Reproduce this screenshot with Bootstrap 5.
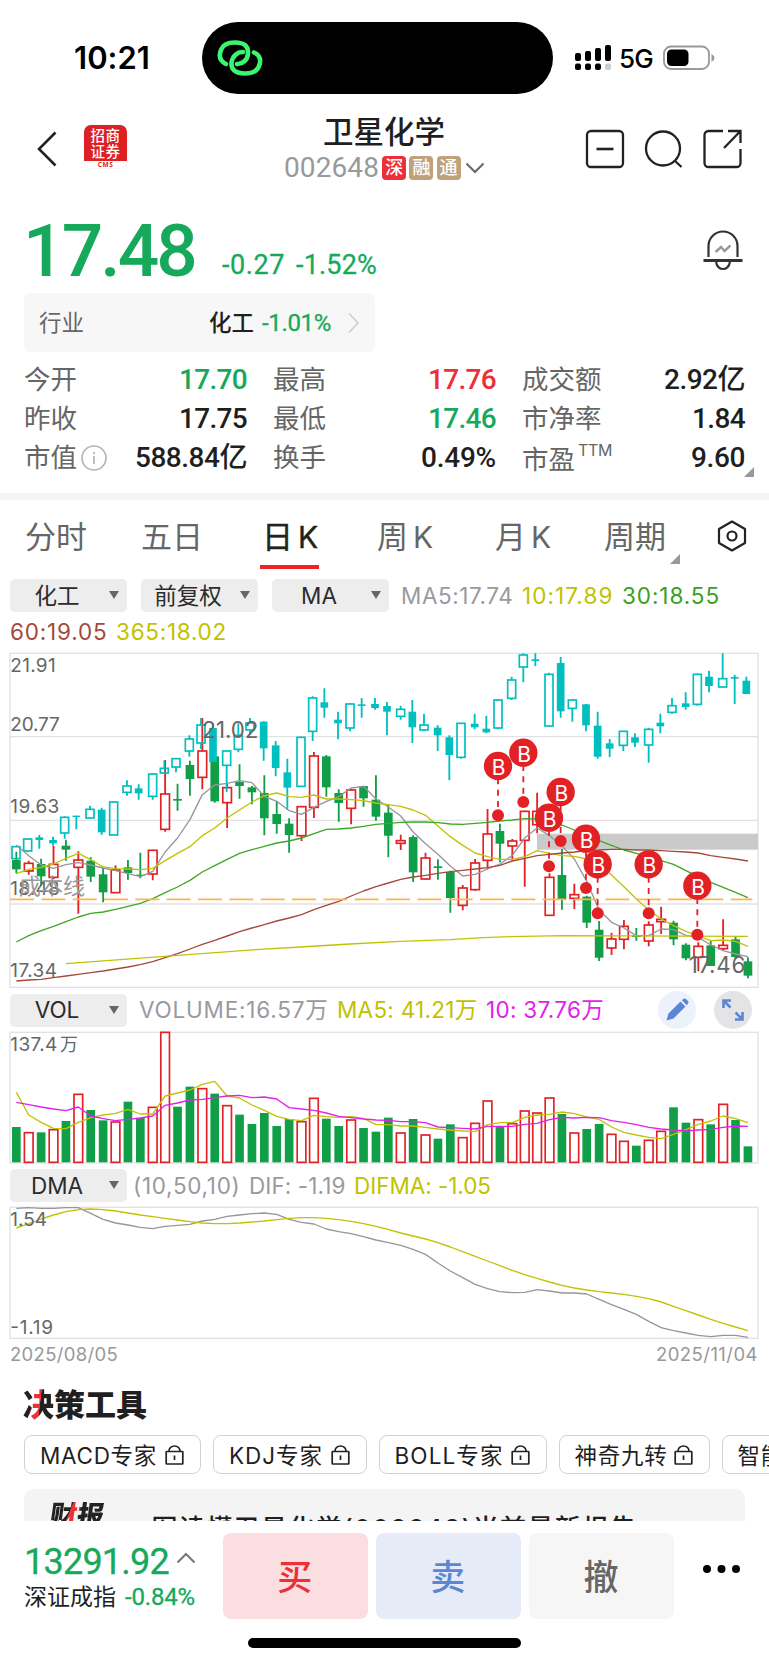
<!DOCTYPE html>
<html lang="zh-CN">
<head>
<meta charset="utf-8">
<meta name="viewport" content="width=device-width, initial-scale=1">
<title>卫星化学 002648</title>
<link href="https://cdn.jsdelivr.net/npm/bootstrap@5.3.0/dist/css/bootstrap.min.css" rel="stylesheet">
<style>
:root{--up:#ec3038;--down:#17a95b;--ink:#1f1f1f;--soft:#666}
html,body{height:1665px;overflow:hidden;background:#fff}
body{font-family:Inter,"Noto Sans CJK SC",sans-serif;color:var(--ink);line-height:1;width:769px}
svg{display:block;flex:none}
span,b{white-space:nowrap}
.num{font-family:Roboto,"Noto Sans CJK SC",sans-serif;font-weight:500}
.num.lite{font-weight:400;-webkit-text-stroke:.3px currentColor}
.up{color:var(--up)}.down{color:var(--down)}.soft{color:var(--soft)}
.status{height:110px;padding-left:74px}
.clock{font-size:31px;font-weight:600;color:#000;width:128px;padding-top:5px}
.island{width:351px;height:72px;border-radius:36px;background:#000;margin-top:6px;padding-left:15px}
.bars{margin:5px 0 0 22px}
.net{font-size:26px;font-weight:500;color:#000;width:44px;margin-left:6px;padding-top:7px}
.battery{margin:5px 0 0 0}
.titlebar{height:90px;padding-left:37px}
.logo{width:43px;height:43px;border-radius:7px;background:linear-gradient(#dc2023 84%,#fff 84%);color:#fff;font-weight:500;font-size:14.5px;letter-spacing:.6px;line-height:15.5px;padding-top:3px;margin:15px 0 0 27px;box-shadow:0 0 1px #bbb}
.logo small{display:block;font:700 6.5px/7px "Open Sans",sans-serif;color:#dc2023;margin-top:1.5px}
.stock{width:259px;margin-left:170px;padding-top:5px}
.name{font-size:30.5px;font-weight:500;height:34px;line-height:34px;padding-left:26px}
.codeline{height:38px;margin-left:-13px}
.code{font-size:28px;color:#999;font-weight:400}
.tag{width:24px;height:24px;border-radius:4px;color:#fff;font-size:18px;font-weight:500;line-height:24px;text-align:center;margin-left:3.2px;background:#bfa27c}
.tag.sz{background:#ec3038}
.quote{height:93px;padding:0 26px 0 23px}
.price{font-size:73px;line-height:86px;width:200px;padding-top:8px}
.delta{font-size:27px;padding-top:52px;margin-left:-1px}
.industry{width:351px;height:59px;margin-left:24px;border-radius:7px;background:#f7f7f7;padding:1px 15px 0 15px;font-size:22.5px}
.stats{display:grid;grid-template-columns:repeat(3,223px);column-gap:26px;grid-auto-rows:39px;padding:8px 0 0 24px;height:141px;font-size:26.5px;position:relative}
.stats>div{display:flex;justify-content:space-between;align-items:center}
.stats .num{font-size:28px}
.corner{position:absolute;width:0;height:0;border-left:10px solid transparent;border-bottom:10px solid #999}
.ttm{font-size:16px;vertical-align:13px;margin-left:3px}
.band{height:7px;background:#f4f4f4}
.periods{display:grid;grid-template-columns:116px 123px 113px 118px 109px 113px 30px;padding-left:25px;height:74px;padding-bottom:2px;align-items:center;font-size:31px;color:#666;position:relative}
.periods i:not(.corner){font-style:normal;margin-left:5px;font-size:30px}
.periods .on{color:#222;margin-left:-2px;-webkit-text-stroke:.4px #222}
.periods .on::after{content:"";position:absolute;left:260px;top:65px;width:59px;height:4px;background:#ee2326}
.pick{width:117px;height:33px;border-radius:5px;background:#ededed;color:#2b2b2b;font-size:22.5px;position:relative;padding:1px 23px 0 0;flex:none}
.pick::after{content:"";position:absolute;right:8px;top:12px;border:5.5px solid transparent;border-top:8px solid #666;border-bottom:0}
.legend{font-size:22.5px;height:33px;color:#9999a0}
.legend>span,.legend>div>span{padding-top:1px}
.c10{color:#c1c100}.c30{color:#38a11c}.c60{color:#a14b3d}.cm{color:#e321ea}
svg text{font-family:Inter,"Noto Sans CJK SC",sans-serif}
.round{width:38px;height:38px;border-radius:50%;background:#ecf1fb}
.dates{font-size:18.5px;color:#999;padding:5px 11px 0 10px;height:40px}
.tools-title{font-size:31px;font-weight:900;line-height:34px;padding:8px 0 0 23px;height:55.2px}
.jue{background:linear-gradient(97deg,#222 29%,#ec3038 30% 54%,#222 55%);-webkit-background-clip:text;background-clip:text;color:transparent}
.chips{padding-left:24px;gap:12px;height:39px;width:769px;overflow:hidden}
.chip{height:39px;border:1.5px solid #d0d0d0;border-radius:8px;font-size:22.5px;padding:2px 16px 0 15px;flex:none;justify-content:space-between}
.report{margin:15px 24px 0;height:32px;border-radius:10px 10px 0 0;background:#f4f4f4;overflow:hidden;padding-left:26px}
.report b{font-size:27px;font-weight:900;transform:skewX(-8deg);display:inline-block;margin-top:10px;background:linear-gradient(105deg,#222 35%,#ec3038 36% 50%,#222 51%);-webkit-background-clip:text;background-clip:text;color:transparent;line-height:34px}
.report span{font-size:26px;font-weight:500;margin:23px 0 0 20px;line-height:34px}
.tradebar{height:97px;padding:12px 0 0 24px}
.index{width:199px}
.act{width:144.5px;height:86px;border-radius:8px;font-size:35px;font-weight:500;margin-right:8.6px;padding:2px 1px 0 0}
.home{width:273px;height:10px;border-radius:5px;background:#000;margin:20px 0 0 248px}
</style>
</head>
<body>
<div class="status d-flex align-items-center">
  <span class="clock"><span data-w="76">10:21</span></span>
  <div class="island d-flex align-items-center">
    <svg width="46" height="36" viewBox="0 0 46 36" fill="none" stroke="#3bf56e" stroke-width="4.6" stroke-linecap="round"><path d="M9 24C3 21 1.5 16 4 10C6 4 12 2.5 18 2.5C28 2.5 31.500 7 31 13C31 20 25 24.500 20 24"/><path d="M37 12.500C43 15 44.500 20 42 26C40 32 34 33.500 28 33.500C18 33.500 14 29 14.500 23C15 16 21 11.500 26 12"/></svg>
  </div>
  <svg class="bars" width="38" height="26" viewBox="0 0 38 26"><g fill="#000"><rect x="0" y="8" width="6" height="8" rx="2"/><rect x="10" y="6" width="6" height="10" rx="2"/><rect x="20" y="3" width="6" height="13" rx="2"/><rect x="30" y="0" width="6" height="16" rx="2"/><rect x="0" y="18.500" width="6" height="6.500" rx="2"/><rect x="10" y="18.500" width="6" height="6.500" rx="2"/><rect x="20" y="18.500" width="6" height="6.500" rx="2"/></g><rect x="30" y="18.500" width="6" height="6.500" rx="2" fill="#ccc"/></svg>
  <span class="net"><span data-w="34">5G</span></span>
  <svg class="battery" width="52" height="26" viewBox="0 0 52 26"><rect x="1" y="1.500" width="45" height="22.500" rx="7" fill="none" stroke="#999" stroke-width="1.800"/><rect x="4" y="4.500" width="21.500" height="16.500" rx="4.500"/><path d="M48.500 9v8q3-1.500 3-4t-3-4" fill="#999"/></svg>
</div>

<div class="titlebar d-flex">
  <svg style="margin-top:21px" width="20" height="36" viewBox="0 0 20 36" fill="none" stroke="#222" stroke-width="2.600"><path d="M18.500 1.500L2 18L18.500 34.500"/></svg>
  <div class="logo text-center">招商<br>证券<small>CMS</small></div>
  <div class="stock">
    <div class="name"><span data-w="122">卫星化学</span></div>
    <div class="codeline d-flex align-items-center"><span class="num code" data-w="95">002648</span><span class="tag sz">深</span><span class="tag">融</span><span class="tag">通</span>
    <svg style="margin-left:4px" width="20" height="12" viewBox="0 0 20 12" fill="none" stroke="#666" stroke-width="2"><path d="M1.500 1.500L10 10L18.500 1.500"/></svg></div>
  </div>
  <svg style="margin:18.500px 0 0 27px" width="160" height="42" viewBox="0 0 160 42" fill="none" stroke="#222" stroke-width="2.300"><rect x="4" y="2" width="36" height="36" rx="4"/><path d="M13.500 20h17" stroke-width="2.600"/><circle cx="80" cy="19.500" r="17"/><path d="M91.500 31.500L98.500 38"/><path d="M140 2h-14.500a4 4 0 0 0-4 4v28a4 4 0 0 0 4 4h28a4 4 0 0 0 4-4v-14M145 2h12.500v12M157 2.500L141 19"/></svg>
</div>

<div class="quote d-flex">
  <span class="price num down"><span data-w="172">17.48</span></span>
  <span class="delta num lite down"><span data-w="63">-0.27</span><span data-w="81" style="margin-left:11px">-1.52%</span></span>
  <svg class="ms-auto" style="margin-top:30px" width="40" height="42" viewBox="0 0 40 42" fill="none" stroke="#333" stroke-width="2.200"><path d="M5.500 27V16a14.500 14.500 0 0 1 29 0V27"/><path d="M.5 30.500h39" stroke-width="2.800"/><path d="M13 32q1.500 7 7 7t7-7"/><path d="M12.500 22L18 17L21.500 21L27.500 15.500" stroke="#999" stroke-width="2.400"/></svg>
</div>
<div class="industry d-flex align-items-center">
  <span class="soft">行业</span><span class="ms-auto me-2 fw-medium" style="font-weight:500">化工</span><span class="num lite down" style="font-size:24px" data-w="69">-1.01%</span>
  <svg style="margin-left:17px" width="12" height="22" viewBox="0 0 12 22" fill="none" stroke="#ccc" stroke-width="1.500"><path d="M1 1.500L10 11L1 20.500"/></svg>
</div>
<div class="stats">
  <div><span class="soft">今开</span><span class="num down" data-w="68">17.70</span></div>
  <div><span class="soft">最高</span><span class="num up" data-w="68">17.76</span></div>
  <div><span class="soft">成交额</span><span class="num" data-w="81">2.92亿</span></div>
  <div><span class="soft">昨收</span><span class="num" data-w="68">17.75</span></div>
  <div><span class="soft">最低</span><span class="num down" data-w="68">17.46</span></div>
  <div><span class="soft">市净率</span><span class="num" data-w="53">1.84</span></div>
  <div><span class="soft d-flex align-items-center">市值<svg class="ms-1" width="26" height="26" viewBox="0 0 26 26" fill="none" stroke="#b5b5b5" stroke-width="1.700"><circle cx="13" cy="13" r="12"/><path d="M13 11v8M13 7v2.200"/></svg></span><span class="num" data-w="112">588.84亿</span></div>
  <div><span class="soft">换手</span><span class="num" data-w="75">0.49%</span></div>
  <div><span class="soft">市盈<span class="ttm" data-w="34">TTM</span></span><span class="num" data-w="54">9.60</span></div>
  <i class="corner" style="left:744px;top:115px"></i>
</div>
<div class="band"></div>

<div class="periods">
  <span>分时</span><span>五日</span><span class="on">日<i>K</i></span><span>周<i>K</i></span><span>月<i>K</i></span><span>周期</span>
  <svg width="30" height="32" viewBox="0 0 30 32" fill="none" stroke="#222" stroke-width="2.200" stroke-linejoin="round"><path d="M15 1.500L28 9V23L15 30.500L2 23V9Z"/><circle cx="15" cy="16" r="4.500"/></svg>
  <i class="corner" style="left:670px;top:54px"></i>
</div>

<div class="d-flex legend" style="padding-left:10px;margin-top:5px">
  <div class="d-flex" style="gap:14px"><div class="pick d-flex align-items-center justify-content-center">化工</div><div class="pick d-flex align-items-center justify-content-center">前复权</div><div class="pick d-flex align-items-center justify-content-center">MA</div></div>
  <div class="d-flex align-items-center" style="margin-left:12px"><span data-w="121">MA5:17.74</span><span class="c10" data-w="100">10:17.89</span><span class="c30" data-w="98">30:18.55</span></div>
</div>
<div class="d-flex legend align-items-center" style="padding-left:10px;height:39.6px"><span class="c60" data-w="106">60:19.05</span><span class="c10" data-w="111">365:18.02</span></div>

<svg id="kline" width="769" height="338" viewBox="0 34 2307 1014"></svg>

<div class="d-flex legend align-items-center" style="padding-left:10px;height:41px">
  <div class="pick d-flex align-items-center justify-content-center">VOL</div>
  <span style="margin-left:12px" data-w="198">VOLUME:16.57万</span><span class="c10" data-w="149">MA5: 41.21万</span><span class="cm" data-w="118">10: 37.76万</span>
  <div class="round d-flex align-items-center justify-content-center ms-auto"><svg width="24" height="24" viewBox="0 0 24 24" fill="#5b86d6"><path d="M1.500 22.500L3.500 15.500L15.500 3.500L20.500 8.500L8.500 20.500ZM16.800 2.200L18.500.8Q20 0 21.500 1.500L22.700 2.700Q24 4 23 5.500L21.800 7.200Z"/></svg></div>
  <div class="round d-flex align-items-center justify-content-center" style="background:#e4e4e7;margin:0 17px 0 18px"><svg width="24" height="24" viewBox="0 0 24 24" fill="#5b86d6" stroke="#5b86d6" stroke-width="2.600"><path d="M2.500 10V2.500H10M3 3L9.500 9.500M21.500 14V21.500H14M21 21L14.500 14.500" fill="none"/><path d="M2.500 2.500h4l-4 4zM21.500 21.500h-4l4-4z" stroke="none"/></svg></div>
</div>
<svg id="vol" width="769" height="134" viewBox="0 136 2307 402"></svg>
<div class="d-flex legend align-items-center" style="padding-left:10px;height:41.700px">
  <div class="pick d-flex align-items-center justify-content-center">DMA</div>
  <span style="margin-left:6px" data-w="116">(10,50,10)</span><span data-w="105">DIF: -1.19</span><span class="c10" data-w="137">DIFMA: -1.05</span>
</div>
<svg id="dma" width="769" height="134" viewBox="0 123 2307 402"></svg>
<div class="dates d-flex justify-content-between"><span data-w="108">2025/08/05</span><span data-w="102">2025/11/04</span></div>

<div class="tools-title"><span class="jue">决</span>策工具</div>
<div class="chips d-flex">
  <div class="chip d-flex align-items-center" style="width:177px"><span data-w="117">MACD专家</span><svg width="19" height="24"><use href="#lock"/></svg></div>
  <div class="chip d-flex align-items-center" style="width:153.500px"><span data-w="94">KDJ专家</span><svg width="19" height="24"><use href="#lock"/></svg></div>
  <div class="chip d-flex align-items-center" style="width:168px"><span data-w="109">BOLL专家</span><svg width="19" height="24"><use href="#lock"/></svg></div>
  <div class="chip d-flex align-items-center" style="width:151px"><span data-w="93">神奇九转</span><svg width="19" height="24"><use href="#lock"/></svg></div>
  <div class="chip d-flex align-items-center" style="width:151px"><span data-w="93">智能选股</span><svg width="19" height="24"><use href="#lock"/></svg></div>
</div>
<svg width="0" height="0" class="position-absolute"><symbol id="lock" viewBox="0 0 19 24"><g fill="none" stroke="#222" stroke-width="1.700"><rect x="1.200" y="7.500" width="16.600" height="12.500" rx=".6"/><path d="M4 7.500V7a5.500 5 0 0 1 11 0V7.500M9.500 11.500v4.500"/></g></symbol></svg>
<div class="report d-flex align-items-start"><b>财报</b><span data-w="513">一图读懂卫星化学(002648)当前最新报告</span></div>

<div class="tradebar d-flex">
  <div class="index">
    <div class="d-flex align-items-center" style="height:57px"><span class="num lite down" style="font-size:36px" data-w="145">13291.92</span><svg style="margin:-8px 0 0 7px" width="20" height="12" viewBox="0 0 20 12" fill="none" stroke="#777" stroke-width="2"><path d="M1.500 10.500L10 2L18.500 10.500"/></svg></div>
    <div class="d-flex align-items-center" style="height:22px;margin-top:-4px"><span style="font-size:23px" data-w="92">深证成指</span><span class="num lite down" style="font-size:24px;margin-left:9px" data-w="70">-0.84%</span></div>
  </div>
  <div class="act d-flex align-items-center justify-content-center up" style="background:#fbdfe0">买</div>
  <div class="act d-flex align-items-center justify-content-center" style="background:#e5ebf7;color:#5b86d6">卖</div>
  <div class="act d-flex align-items-center justify-content-center soft" style="background:#f6f6f6">撤</div>
  <svg style="margin:29.500px 0 0 20px" width="40" height="12" viewBox="0 0 40 12"><circle cx="5" cy="6" r="4"/><circle cx="19.500" cy="6" r="4"/><circle cx="34" cy="6" r="4"/></svg>
</div>
<div class="home"></div>

<script src="https://cdn.jsdelivr.net/npm/bootstrap@5.3.0/dist/js/bootstrap.bundle.min.js"></script>
<script>
// Chart units: three per CSS pixel. Candle: [high, bodyTop, bodyBottom, low, kind]
const X = i => 49 + 37.2 * i;
const GREEN = '#109e46', RED = '#e22125', CYAN = '#00bfbf';
const sector = [
[48,616,618,654,656,1],[83,592,595,631,635,1],[118,583,590,598,624,0],[159,588,598,608,615,0],[194,527,530,577,594,1],[229,525,525,529,566,0],[270,495,506,532,532,1],[305,501,507,575,582,0],[341,482,484,583,583,1],[381,419,436,455,465,1],[416,431,443,458,477,0],[458,398,400,467,477,1],[493,360,383,397,397,1],[528,352,354,379,395,1],[568,284,295,331,348,1],[603,232,253,307,325,1],[639,248,262,364,364,0],[680,328,331,374,454,1],[715,248,284,326,335,1],[750,232,247,268,280,1],
[791,242,243,323,360,0],[827,301,314,382,407,0],[862,354,395,441,508,0],[903,288,290,437,437,1],[938,167,172,272,301,1],[973,143,185,201,231,0],[1014,213,237,248,296,0],[1050,188,190,262,272,1],[1085,172,191,196,231,0],[1125,172,190,202,207,0],[1161,184,196,213,284,0],[1202,195,206,227,237,1],[1237,178,213,260,307,0],[1272,219,253,268,272,1],[1313,254,261,284,331,0],[1348,284,290,343,419,0],[1383,246,248,350,354,1],[1424,219,249,260,266,0],[1459,225,264,275,278,0],[1494,175,178,262,266,1],
[1535,108,118,173,178,1],[1570,38,43,79,125,1],[1606,38,56,61,77,0],[1647,96,101,256,256,1],[1682,49,67,212,231,0],[1717,175,178,203,243,1],[1758,190,191,254,272,0],[1793,213,255,348,354,0],[1829,295,308,324,349,0],[1870,270,272,314,331,1],[1905,278,290,306,319,0],[1946,261,266,313,366,1],[1981,219,246,257,278,0],[2016,172,195,215,219,1],[2057,155,188,199,207,0],[2092,99,101,191,195,1],[2127,90,108,136,155,0],[2168,38,114,139,139,1],[2204,102,109,114,190,0],[2239,108,120,160,160,0]];
const stock = [
[633,658,686,698,0],[660,668,691,702,1],[654,670,707,735,0],[616,671,710,716,1],[597,615,627,660,0],[632,658,680,819,1],[650,660,708,724,0],[680,701,755,785,0],[674,688,756,756,1],[658,680,697,717,0],[636,702,706,713,0],[627,629,700,719,1],[358,460,566,573,1],[429,475,480,510,0],[360,373,415,465,0],[232,331,410,446,1],[346,347,482,486,0],[430,441,486,562,1],[371,424,436,474,0],[436,440,455,491,0],
[404,457,533,584,0],[482,520,550,579,0],[533,549,583,636,0],[496,498,585,601,1],[334,346,500,532,1],[343,347,440,468,0],[446,457,487,543,0],[446,448,503,551,1],[435,436,473,498,0],[404,477,528,540,0],[492,516,585,650,0],[582,600,608,628,1],[584,589,695,724,0],[636,652,715,717,1],[656,677,682,717,0],[690,694,772,816,0],[733,742,794,809,1],[655,667,747,750,1],[505,580,659,684,1],[549,571,609,665,0],
[595,601,616,660,1],[510,512,599,738,1],[456,512,552,578,1],[698,710,824,824,1],[625,703,775,807,0],[729,762,773,805,1],[765,768,846,862,0],[841,867,951,961,0],[876,895,922,943,1],[838,857,896,926,1],[862,884,889,900,0],[842,853,901,917,1],[798,836,843,880,1],[840,846,896,914,0],[908,912,953,959,0],[905,917,950,992,1],[900,914,976,976,0],[836,914,924,928,1],[888,896,949,955,0],[950,962,1005,1013,0]];
const ma = {
'#96969c':[613,645,673,683,672,666,673,682,690,699,708,692,634,592,537,462,433,428,420,426,467,482,510,521,500,482,468,442,437,475,499,526,574,609,641,676,706,701,685,670,644,592,562,585,616,655,722,808,845,862,885,885,865,867,884,890,913,930,940,948],
'#c2c204':[699,686,680,670,653,638,657,679,684,685,687,683,660,638,618,585,562,532,508,484,465,457,468,470,463,475,475,477,480,487,492,497,508,524,556,588,614,637,648,656,656,648,630,638,645,647,655,670,703,738,775,808,835,855,872,886,900,898,902,917],
'#3da824':[904,885,870,857,843,829,818,814,806,797,788,774,756,739,719,694,675,656,638,627,617,607,601,592,579,566,565,562,557,551,548,545,544,544,546,550,551,548,545,541,538,534,535,545,553,568,585,600,614,628,638,648,660,671,690,708,725,740,755,771],
'#a5493b':[1021,1018,1016,1011,1006,1001,996,991,985,979,972,963,951,939,925,911,899,886,873,862,852,841,832,822,807,794,782,766,751,738,727,716,709,704,698,693,689,685,681,674,661,653,645,641,637,634,630,628,626,626,628,628,630,632,634,637,645,650,655,661]};
const line = (pts, c, w = 4) => `<polyline points="${pts.map(p => p.join()).join(' ')}" fill="none" stroke="${c}" stroke-width="${w}" stroke-linejoin="round"/>`;
const series = (ys, c) => line(ys.map((y, i) => [X(i), y]), c);
const label = (x, y, s, size, w, c = '#666') => `<text x="${x}" y="${y}" font-size="${size}" fill="${c}" textLength="${w}">${s}</text>`;
function candle(x, h, t, b, l, hollow, c, w) {
  let s = `<path d="M${x} ${h}V${hollow ? t : l}M${x} ${b}V${l}" stroke="${c}" stroke-width="5.500"/>`;
  return s + (hollow
    ? `<rect x="${x - w / 2 + 2}" y="${t}" width="${w - 4}" height="${b - t}" fill="none" stroke="${c}" stroke-width="5"/>`
    : `<rect x="${x - w / 2}" y="${t}" width="${w}" height="${b - t}" fill="${c}"/>`);
}
const frame = (t, b) => `<rect x="30" y="${t}" width="2244" height="${b - t}" fill="none" stroke="#e2e2e4" stroke-width="4"/>`;

let k = frame(38, 1040) + [288, 539, 790].map(y => `<path d="M30 ${y}H2274" stroke="#e2e2e4" stroke-width="4"/>`).join('');
k += '<rect x="1611" y="579" width="663" height="48" fill="#cacaca"/>';
k += stock.map((d, i) => candle(X(i), d[0], d[1], d[2], d[3], d[4], d[4] ? RED : GREEN, d[4] ? 30 : 26)).join('');
k += sector.map(d => candle(d[0], d[1], d[2], d[3], d[4], d[5], CYAN, d[5] ? 28 : 23)).join('');
for (const c in ma) k += series(ma[c], c);
k += line([[198,969],[780,926],[900,919],[1050,910],[1200,902],[1350,897],[1450,891],[1530,888],[1686,885],[2244,887]], '#c2c204');
k += '<path d="M30 776H2257" stroke="#ffb54f" stroke-width="5" stroke-dasharray="72 22"/>';
k += label(31, 94, '21.91', 57, 136) + label(31, 271, '20.77', 57, 148) + label(31, 517, '19.63', 57, 147) + label(31, 763, '18.48', 57, 148) + label(31, 1008, '17.34', 57, 140);
k += label(57, 760, '成本线', 66, 198, '#999') + label(607, 293, '21.02', 67, 168) + label(2066, 998, '17.46', 67, 170);
for (const [x, y, d] of [[1494,376,524],[1570,336,484],[1682,454,601],[1647,531,677],[1758,594,742],[1793,671,818],[1946,671,818],[2092,735,882]])
  k += `<path d="M${x} ${y + 37}V${d}" stroke="${RED}" stroke-width="5.500" stroke-dasharray="18 16"/><circle cx="${x}" cy="${d}" r="18" fill="${RED}"/><circle cx="${x}" cy="${y}" r="42.500" fill="${RED}"/><text x="${x + 2}" y="${y + 27}" font-size="63" fill="#fff" text-anchor="middle">B</text>`;
document.getElementById('kline').innerHTML = k;

const vols = '424g,440r,440g,431r,406g,325r,373g,404g,408r,348g,397g,364r,139r,363g,303g,308r,324g,359r,387g,415g,382g,421g,400g,407r,337r,399g,421g,402r,427g,438g,396g,441r,400g,447r,459g,416g,455r,412r,345r,422g,413r,375r,381r,336r,385g,441r,430g,415g,445r,466r,480g,463r,436r,365g,411g,401r,416g,355r,403g,482g'.split(',');
let v = frame(140, 532) + vols.map((d, i) => {
  const t = parseInt(d), r = d.endsWith('r');
  return r ? `<rect x="${X(i) - 13}" y="${t + 1}" width="26" height="${529 - t}" fill="none" stroke="${RED}" stroke-width="5"/>`
           : `<rect x="${X(i) - 13}" y="${t}" width="26" height="${530 - t}" fill="${GREEN}"/>`;
}).join('');
v += series([320,388,410,428,429,410,396,388,383,371,385,385,331,322,313,296,287,331,337,358,374,392,401,405,389,393,395,393,398,417,417,421,421,425,430,433,436,438,417,411,411,395,388,386,379,384,394,401,424,440,448,455,459,446,432,416,406,391,399,411], '#c2c204');
v += series([350,357,364,370,375,364,391,399,405,401,397,391,359,352,343,341,336,331,329,336,334,340,366,370,374,382,392,396,400,403,404,408,408,411,424,426,428,430,422,422,422,416,413,402,395,397,395,396,405,410,417,425,430,433,436,433,431,425,421,422], '#e321ea');
document.getElementById('vol').innerHTML = v + label(31, 195, '137.4', 57, 141) + label(180, 195, '万', 54, 54);

let m = frame(127, 520);
m += series([130,128,130,130,128,128,145,163,174,180,187,191,184,181,178,168,163,154,150,146,144,148,163,172,177,192,200,206,215,225,233,241,253,268,294,318,338,358,371,380,383,382,374,378,384,384,387,403,419,433,448,469,488,497,504,511,515,511,511,517], '#96969c');
m += series([189,176,162,150,140,134,132,134,138,144,150,155,160,165,170,174,176,176,174,171,168,164,160,158,158,160,164,169,176,184,193,204,213,222,233,246,260,274,288,302,316,329,340,351,361,369,375,380,384,388,394,401,411,424,437,450,463,475,486,497], '#c2c204');
document.getElementById('dma').innerHTML = m + label(31, 183, '1.54', 57, 110) + label(31, 507, '-1.19', 57, 128);

// Track each label so that it fills its advance width
function fit() {
  document.querySelectorAll('[data-w]').forEach(e => {
    e.style.letterSpacing = '0px'; e.style.flex = 'none';
    const gap = e.closest('.legend') && e.nextElementSibling && e.nextElementSibling.matches('[data-w]') ? 8.5 : 0;
    const r = document.createRange(); r.selectNodeContents(e);
    const n = [...e.textContent].length;
    e.style.letterSpacing = ((+e.dataset.w - gap - r.getBoundingClientRect().width) / n).toFixed(3) + 'px';
    if (gap) e.style.marginRight = gap + 'px';
  });
}
fit(); document.fonts.ready.then(fit);
</script>
</body>
</html>
